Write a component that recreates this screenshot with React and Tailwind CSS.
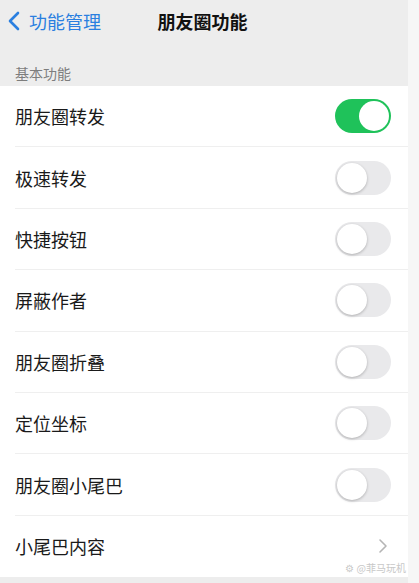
import React from "react";

const font = { fontFamily: '"Noto Sans CJK SC", "Noto Sans", sans-serif' };

function Toggle({ on }) {
  return on ? (
    <div className="relative h-[34px] w-[56px] rounded-full bg-[#1fc25a]">
      <div className="absolute right-[2px] top-[2px] h-[30px] w-[30px] rounded-full bg-white" />
    </div>
  ) : (
    <div className="relative h-[34px] w-[56px] rounded-full bg-[#e9e9eb]">
      <div className="absolute left-[2px] top-[2px] h-[30px] w-[30px] rounded-full bg-white shadow-[0_1px_3px_rgba(0,0,0,0.25)]" />
    </div>
  );
}

const rows = [
  ["朋友圈转发", true],
  ["极速转发", false],
  ["快捷按钮", false],
  ["屏蔽作者", false],
  ["朋友圈折叠", false],
  ["定位坐标", false],
  ["朋友圈小尾巴", false],
];

export default function App() {
  return (
    <div className="flex h-[583px] w-[419px] overflow-hidden" style={font}>
      <div className="flex w-[408px] flex-col bg-[#ededed]">
        <div className="relative flex h-[42px] items-center">
          <div className="flex items-center pl-[7px] text-[#2a7fe0]">
            <svg width="14" height="20" viewBox="0 0 14 20" fill="none">
              <path d="M11 2 L3 10 L11 18" stroke="#2a7fe0" strokeWidth="2.6" strokeLinecap="round" strokeLinejoin="round" />
            </svg>
            <span className="ml-[8px] text-[18px] leading-none">功能管理</span>
          </div>
          <div className="absolute left-0 right-0 top-0 flex h-[42px] items-center justify-center pointer-events-none">
            <span className="ml-[-3px] text-[18px] font-bold leading-none text-[#111]">朋友圈功能</span>
          </div>
        </div>
        <div className="flex h-[44px] items-end pb-[6px] pl-[15px]">
          <span className="text-[14px] leading-none text-[#7d7d7d]">基本功能</span>
        </div>
        <div className="flex flex-col bg-white">
          {rows.map(([label, on], i) => (
            <div key={label} className="flex h-[61.4px] items-center pl-[15px]">
              <div className={"flex h-full flex-1 items-center justify-between pr-[17px] " + "border-b border-[#efefef]"}>
                <span className="text-[18px] leading-none text-[#1a1a1a]">{label}</span>
                <Toggle on={on} />
              </div>
            </div>
          ))}
          <div className="relative flex h-[61.4px] items-center pl-[15px] pr-[20px]">
            <span className="flex-1 text-[18px] leading-none text-[#1a1a1a]">小尾巴内容</span>
            <svg width="10" height="16" viewBox="0 0 10 16" fill="none">
              <path d="M2 2 L8 8 L2 14" stroke="#b5b5b5" strokeWidth="1.6" strokeLinecap="round" strokeLinejoin="round" />
            </svg>
            <span className="absolute bottom-[4px] right-[2px] text-[10px] leading-none text-[#c8c8c8]">⚙ @菲马玩机</span>
          </div>
        </div>
        <div className="flex-1 bg-[#ededed]" />
      </div>
      <div className="flex-1 bg-[#f6f6f6]" />
    </div>
  );
}
